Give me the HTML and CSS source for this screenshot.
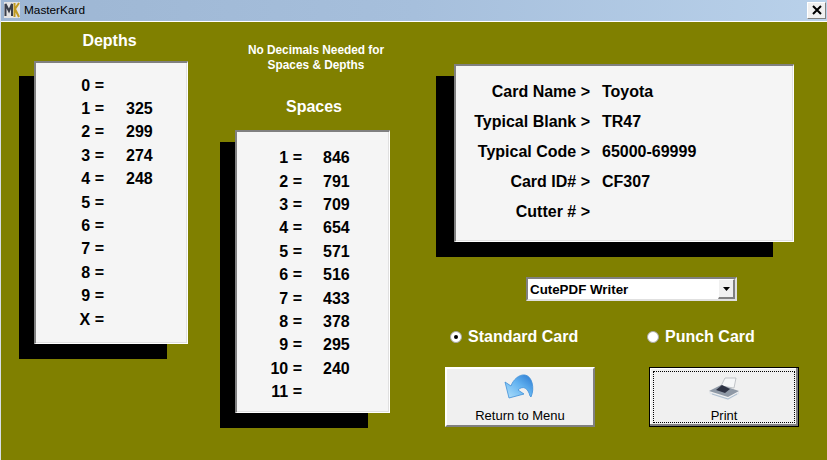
FILE: index.html
```html
<!DOCTYPE html>
<html lang="en">
<head>
<meta charset="utf-8">
<title>MasterKard</title>
<link rel="stylesheet" href="styles.css">
</head>
<body>
<div class="window">
  <header class="titlebar">
    <svg class="appicon" width="16" height="16" viewBox="0 0 16 16"><rect width="16" height="16" fill="#e4e4e4"/><path d="M1.500 14V2L5 9l3-7v12" fill="none" stroke="#3a3f4a" stroke-width="2"/><path d="M10.500 1v14M15 1l-4 6 4 8" fill="none" stroke="#c09a20" stroke-width="2"/></svg>
    <span class="title">MasterKard</span>
    <button class="close"><svg width="10" height="10" viewBox="0 0 10 10"><path d="M1 1l8 8M9 1l-8 8" stroke="#000" stroke-width="2"/></svg></button>
  </header>
  <main class="form">
    <section class="col-depths">
      <h2 class="heading heading-depths">Depths</h2>
      <div class="panel panel-depths">
        <div class="list">
          <span>0 =</span><b></b><span>1 =</span><b>325</b><span>2 =</span><b>299</b><span>3 =</span><b>274</b><span>4 =</span><b>248</b><span>5 =</span><b></b><span>6 =</span><b></b><span>7 =</span><b></b><span>8 =</span><b></b><span>9 =</span><b></b><span>X =</span><b></b>
        </div>
      </div>
    </section>
    <section class="col-spaces">
      <p class="note">No Decimals Needed for<br>Spaces &amp; Depths</p>
      <h2 class="heading heading-spaces">Spaces</h2>
      <div class="panel panel-spaces">
        <div class="list list-spaces">
          <span>1 =</span><b>846</b><span>2 =</span><b>791</b><span>3 =</span><b>709</b><span>4 =</span><b>654</b><span>5 =</span><b>571</b><span>6 =</span><b>516</b><span>7 =</span><b>433</b><span>8 =</span><b>378</b><span>9 =</span><b>295</b><span>10 =</span><b>240</b><span>11 =</span><b></b>
        </div>
      </div>
    </section>
    <section class="col-card">
      <div class="panel panel-card">
        <div class="card-list">
          <span>Card Name &gt;</span><b>Toyota</b><span>Typical Blank &gt;</span><b>TR47</b><span>Typical Code &gt;</span><b>65000-69999</b><span>Card ID# &gt;</span><b>CF307</b><span>Cutter # &gt;</span><b></b>
        </div>
      </div>
      <div class="combo">
        <span class="combo-text">CutePDF Writer</span>
        <span class="combo-btn"><svg width="7" height="4" viewBox="0 0 7 4"><path d="M0 0h7L3.500 4z" fill="#000"/></svg></span>
      </div>
      <div class="radios">
        <label class="radio"><span class="dot on"></span>Standard Card</label>
        <label class="radio"><span class="dot"></span>Punch Card</label>
      </div>
      <div class="buttons">
        <button class="cmd">
          <svg width="34" height="26" viewBox="0 0 34 26"><defs><linearGradient id="arrow" x1="0" y1="1" x2="1" y2="0"><stop offset="0" stop-color="#b4e2fb"/><stop offset="0.55" stop-color="#62b2f0"/><stop offset="1" stop-color="#2a78d0"/></linearGradient></defs><path d="M2 9L6 25L21 21L15 17C20 12 25 15 27 23L28 24C32 15 29 3 22 2C16 1 10 7 8 13Z" fill="url(#arrow)" stroke="#3f8fd8" stroke-width="0.8"/></svg>
          <span class="cmd-label">Return to Menu</span>
        </button>
        <button class="cmd cmd-default">
          <span class="focus">
            <svg width="32" height="24" viewBox="0 0 32 24"><path d="M17 1l11 0-2 10-13-2z" fill="#f6f7f8" stroke="#b4b8bc" stroke-width="0.8"/><path d="M1 14L13 8l18 6-11 6z" fill="#8f99a6"/><path d="M8 13l6-5 8 4-5 4z" fill="#2e3344"/><path d="M1 15l19 6 11-6v2l-11 6-18-6z" fill="#dfe4ea"/><path d="M4 17l16 5 9-5" fill="none" stroke="#9fb4c8" stroke-width="0.8"/></svg>
            <span class="cmd-label cmd-label-print">Print</span>
          </span>
        </button>
      </div>
    </section>
  </main>
</div>
</body>
</html>
```
FILE: styles.css
```css
* { box-sizing: border-box; }
html, body { margin: 0; padding: 0; }
body { width: 827px; height: 460px; overflow: hidden; font-family: "Liberation Sans", Arial, sans-serif; }
.window { width: 827px; height: 460px; display: flex; flex-direction: column; border-left: 1px solid #d8dfe8; }
.titlebar { height: 22px; flex: none; display: flex; align-items: center; padding: 0 0 1px 3px; border-bottom: 1px solid #fff; background: linear-gradient(90deg, #9db6d3 0%, #a6bfdc 50%, #b9d1ea 100%); }
.appicon { flex: none; }
.title { margin-left: 4px; font-size: 11.8px; color: #000; }
.close { margin-left: auto; margin-right: 1px; width: 19px; height: 17px; padding: 0; display: flex; align-items: center; justify-content: center; background: #f0f0f0; border: 1px solid; border-color: #fff #808080 #808080 #fff; }
.form { position: relative; z-index: 0; flex: 1; display: flex; background: #808000; color: #000; }
.heading { margin: 0; font-size: 16px; line-height: 18px; font-weight: 700; color: #fff; text-align: center; }
.heading-depths { padding-right: 3px; }
.panel { position: relative; background: #f5f5f5; border-style: solid; border-width: 2px 1px 1px 2px; border-color: #808080 #fff #fff #808080; box-shadow: inset -1px -1px 0 #e0e0e0; }
.panel::before { content: ""; position: absolute; z-index: -1; background: #000; }
.col-depths { flex: none; width: 154px; margin: 10px 0 0 33px; }
.panel-depths { margin-top: 11px; height: 283px; }
.panel-depths::before { left: -17px; top: 13px; width: 148px; height: 283px; }
.col-spaces { flex: none; width: 155px; margin: 21px 0 0 47px; }
.note { margin: 0 -4px 0 3px; font-size: 11.85px; line-height: 15px; font-weight: 700; color: #fff; text-align: center; white-space: nowrap; }
.heading-spaces { margin-top: 25px; padding-left: 3px; }
.panel-spaces { margin-top: 14px; height: 283px; }
.panel-spaces::before { left: -17px; top: 10px; width: 148px; height: 286px; }
.list { display: grid; grid-template-columns: 68px 1fr; grid-auto-rows: 23.4px; column-gap: 22px; padding-top: 11px; font-size: 16px; font-weight: 700; align-items: center; }
.list span { text-align: right; }
.list b { font-weight: 700; }
.list-spaces { grid-template-columns: 65px 1fr; column-gap: 21px; padding-top: 14.5px; }
.col-card { flex: none; width: 340px; margin: 42px 0 0 64px; }
.panel-card { height: 178px; }
.panel-card::before { left: -20px; top: 10px; width: 337px; height: 181px; }
.card-list { display: grid; grid-template-columns: 134px 1fr; grid-auto-rows: 30px; column-gap: 12px; padding-top: 11px; font-size: 16px; font-weight: 700; align-items: center; }
.card-list span { text-align: right; }
.card-list b { font-weight: 700; }
.combo { margin: 35px 0 0 72px; width: 211px; height: 24px; display: flex; align-items: center; background: #fff; border: 2px solid; border-color: #808080 #e0e0e0 #e0e0e0 #808080; }
.combo-text { flex: 1; padding-left: 2px; font-size: 13.33px; font-weight: 700; }
.combo-btn { width: 17px; height: 20px; display: flex; align-items: center; justify-content: center; background: #f0f0f0; border-style: solid; border-width: 1px 2px 2px 1px; border-color: #fff #808080 #808080 #fff; }
.radios { margin: 27px 0 0 -4px; display: flex; color: #fff; font-size: 16px; font-weight: 700; line-height: 18px; }
.radio { flex: none; display: flex; align-items: center; gap: 6px; width: 197px; }
.dot { flex: none; width: 12px; height: 12px; border-radius: 50%; background: #fff; border: 1px solid #a8a8a8; display: flex; align-items: center; justify-content: center; }
.dot.on::after { content: ""; width: 4px; height: 4px; border-radius: 50%; background: #000; }
.buttons { margin: 21px 0 0 -9px; display: flex; gap: 54px; }
.cmd { flex: none; width: 150px; height: 60px; display: flex; flex-direction: column; align-items: center; justify-content: flex-start; padding: 4px 0 0; font-family: inherit; font-size: 13px; color: #000; background: #f0f0f0; border: 2px solid; border-color: #fff #808080 #808080 #fff; }
.cmd svg { display: block; flex: none; }
.cmd-label { display: block; margin-top: 9px; line-height: 15px; }
.cmd-label-print { margin-top: 7px; }
.cmd-default { padding: 0; border: 1px solid #000; box-shadow: inset -2px -2px 0 #808080, inset 1px 1px 0 #fff; }
.focus { width: 142px; height: 52px; margin-top: 3px; display: flex; flex-direction: column; align-items: center; padding-top: 5px; border: 1px dotted #000; }
```
